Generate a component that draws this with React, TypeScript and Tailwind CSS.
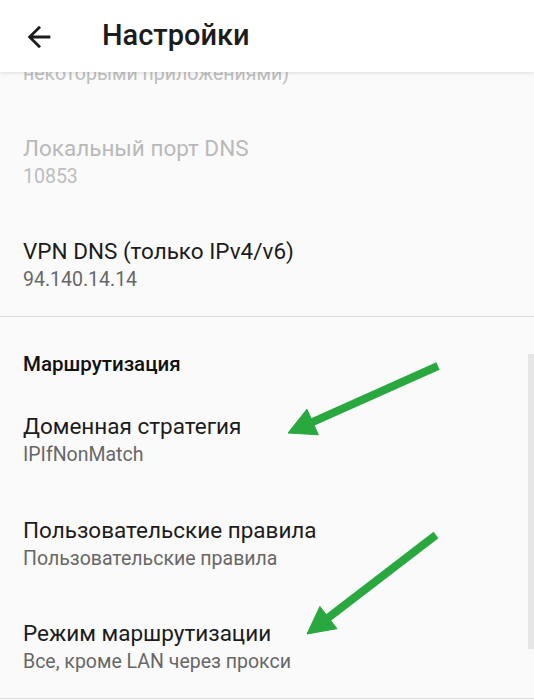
import React from 'react';

const font = { fontFamily: 'Roboto, "Noto Sans", Arial, sans-serif' };

interface PrefProps {
    title: string;
    summary: string;
    disabled?: boolean;
    className?: string;
}

function Pref({ title, summary, disabled, className = 'pt-[23px] pb-[23px]' }: PrefProps) {
    return (
        <div className={`px-[23px] ${className}`}>
            <div className={`text-[22.5px] leading-[30px] ${disabled ? 'text-[#b9b9b9]' : 'text-[#1c1c1c]'}`}>
                {title}
            </div>
            <div className={`text-[19.5px] leading-[27px] ${disabled ? 'text-[#bdbdbd]' : 'text-[#676767]'}`}>
                {summary}
            </div>
        </div>
    );
}

type Pt = [number, number];

function Arrow({ from, to }: { from: Pt; to: Pt }) {
    const dx = to[0] - from[0];
    const dy = to[1] - from[1];
    const len = Math.hypot(dx, dy);
    const ux = dx / len;
    const uy = dy / len;
    const px = -uy;
    const py = ux;
    const head = 27;
    const half = 14;
    const bx = to[0] - ux * head;
    const by = to[1] - uy * head;
    const pts = [
        [to[0], to[1]],
        [bx + px * half, by + py * half],
        [bx - px * half, by - py * half],
    ]
        .map((p) => p.join(','))
        .join(' ');
    return (
        <g fill="#28a83e" stroke="#28a83e">
            <line x1={from[0]} y1={from[1]} x2={bx + ux * 4} y2={by + uy * 4} strokeWidth={8} />
            <polygon points={pts} strokeWidth={1} strokeLinejoin="round" />
        </g>
    );
}

export default function App() {
    return (
        <div className="relative h-[700px] w-[534px] overflow-hidden bg-[#fafafa]" style={font}>
            {/* Toolbar */}
            <div className="relative z-10 flex h-[72px] items-center bg-white shadow-[0_1px_4px_rgba(0,0,0,0.12)]">
                <svg viewBox="0 0 24 24" className="ml-[22px] mt-[2px] h-[34px] w-[34px] fill-[#1c1c1c]">
                    <path d="M20 11H7.83l5.59-5.59L12 4l-8 8 8 8 1.41-1.41L7.83 13H20v-2z" />
                </svg>
                <div className="ml-[46px] text-[29px] font-medium text-[#1c1c1c]">Настройки</div>
            </div>

            {/* Scrolled list */}
            <div className="-mt-[12px] px-[23px] pb-[23px] text-[19.5px] leading-[27px] text-[#bdbdbd]">
                некоторыми приложениями)
            </div>
            <Pref title="Локальный порт DNS" summary="10853" disabled />
            <Pref title="VPN DNS (только IPv4/v6)" summary="94.140.14.14" className="pt-[23px] pb-[23px]" />
            <div className="h-px bg-[#dcdcdc]" />

            <div className="px-[23px] pt-[35px] pb-[12px] text-[20.5px] font-medium leading-[24px] text-[#111]">
                Маршрутизация
            </div>
            <Pref title="Доменная стратегия" summary="IPIfNonMatch" />
            <Pref title="Пользовательские правила" summary="Пользовательские правила" className="pt-[24px] pb-[23px]" />
            <Pref title="Режим маршрутизации" summary="Все, кроме LAN через прокси" className="pt-[23px] pb-[23px]" />
            <div className="h-px bg-[#dcdcdc]" />

            {/* Scrollbar */}
            <div className="absolute top-[354px] right-0 h-[295px] w-[6px] bg-[#e6e6e6]" />

            {/* Annotation arrows */}
            <svg className="pointer-events-none absolute inset-0 z-20" width={534} height={700}>
                <Arrow from={[438, 366]} to={[288, 433]} />
                <Arrow from={[436, 535]} to={[307, 634]} />
            </svg>
        </div>
    );
}
